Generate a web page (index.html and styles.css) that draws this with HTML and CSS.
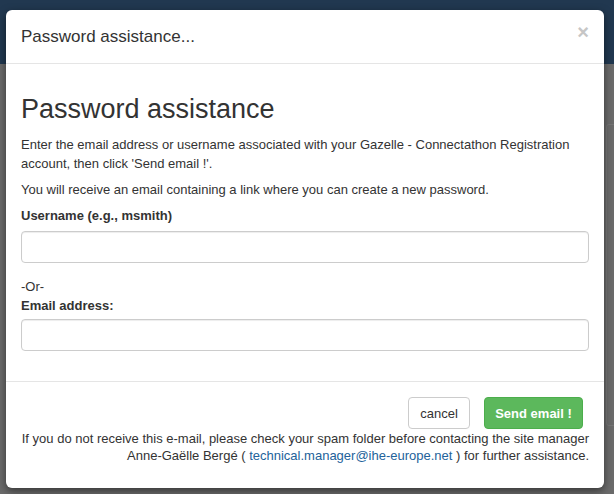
FILE: index.html
```html
<!DOCTYPE html>
<html>
<head>
<meta charset="utf-8">
<link rel="stylesheet" href="styles.css">
</head>
<body>
<div class="backdrop">
  <div class="topbar"></div>
  <div class="side-panel"></div>
  <div class="modal">
    <div class="modal-header">
      <h4 class="modal-title">Password assistance...</h4>
      <span class="close">×</span>
    </div>
    <div class="modal-body">
      <h2 class="page-title">Password assistance</h2>
      <p class="text">Enter the email address or username associated with your Gazelle - Connectathon Registration account, then click 'Send email !'.</p>
      <p class="text">You will receive an email containing a link where you can create a new password.</p>
      <label class="label">Username (e.g., msmith)</label>
      <input class="input" type="text">
      <div class="or">-Or-</div>
      <label class="label label-email">Email address:</label>
      <input class="input" type="text">
    </div>
    <div class="modal-footer">
      <div class="buttons">
        <button class="btn btn-default">cancel</button>
        <button class="btn btn-success">Send email !</button>
      </div>
      <div class="note">If you do not receive this e-mail, please check your spam folder before contacting the site manager<br>Anne-Gaëlle Bergé ( <a class="link" href="#">technical.manager@ihe-europe.net</a> ) for further assistance.</div>
    </div>
  </div>
</div>
</body>
</html>
```

FILE: styles.css
```css
html, body {
  margin: 0;
  padding: 0;
}
body {
  font-family: "Liberation Sans", Arial, sans-serif;
  font-size: 13px;
  color: #333;
  background: #6b6b6b;
  width: 614px;
  height: 494px;
  overflow: hidden;
}
.backdrop {
  position: relative;
  width: 614px;
  height: 494px;
  background: #6b6b6b;
  padding-top: 10px;
  box-sizing: border-box;
}
.topbar {
  position: absolute;
  left: 0;
  top: 0;
  width: 614px;
  height: 64px;
  background: #213850;
}
.side-panel {
  position: absolute;
  left: 606px;
  top: 124px;
  width: 20px;
  height: 300px;
  border: 1px solid #777;
  border-radius: 3px;
  background: #6b6b6b;
}
.modal {
  position: relative;
  margin-left: 6px;
  width: 598px;
  height: 478px;
  background: #fff;
  border-radius: 6px;
  box-shadow: 0 3px 9px rgba(0, 0, 0, 0.5);
  display: flex;
  flex-direction: column;
}
.modal-header {
  position: relative;
  padding: 15px;
  border-bottom: 1px solid #e5e5e5;
}
.modal-title {
  margin: 0;
  font-size: 17px;
  font-weight: normal;
  line-height: 23px;
  color: #333;
}
.close {
  position: absolute;
  right: 15px;
  top: 12px;
  font-size: 20px;
  font-weight: bold;
  color: #c6c6c6;
  line-height: 20px;
}
.modal-body {
  padding: 15px 15px 30px;
  display: flex;
  flex-direction: column;
}
.page-title {
  margin: 15px 0 10px;
  font-size: 27px;
  font-weight: normal;
  line-height: 31px;
  color: #333;
}
.text {
  margin: 0 0 7px;
  line-height: 19px;
}
.label {
  font-weight: bold;
  line-height: 19px;
  margin-top: 0;
  margin-bottom: 6px;
}
.label-email {
  margin-bottom: 4px;
}
.input {
  display: block;
  box-sizing: border-box;
  width: 100%;
  height: 32px;
  border: 1px solid #ccc;
  border-radius: 4px;
  box-shadow: inset 0 1px 1px rgba(0, 0, 0, 0.075);
  margin: 0;
}
.or {
  margin-top: 14px;
  line-height: 19px;
}
.modal-footer {
  border-top: 1px solid #e5e5e5;
  padding: 15px 15px 0;
  text-align: right;
}
.buttons {
  display: flex;
  justify-content: flex-end;
  gap: 14px;
  padding-right: 6px;
}
.btn {
  font-family: "Liberation Sans", Arial, sans-serif;
  font-size: 13px;
  height: 32px;
  padding: 0;
  white-space: nowrap;
  border-radius: 4px;
  border: 1px solid #ccc;
  background: #fff;
  color: #333;
}
.btn-default {
  width: 62px;
}
.btn-success {
  width: 99px;
  background: #5cb85c;
  border-color: #4cae4c;
  color: #fff;
  font-weight: bold;
}
.note {
  margin-top: 1px;
  line-height: 17px;
}
.link {
  color: #23629a;
  text-decoration: none;
}
```
